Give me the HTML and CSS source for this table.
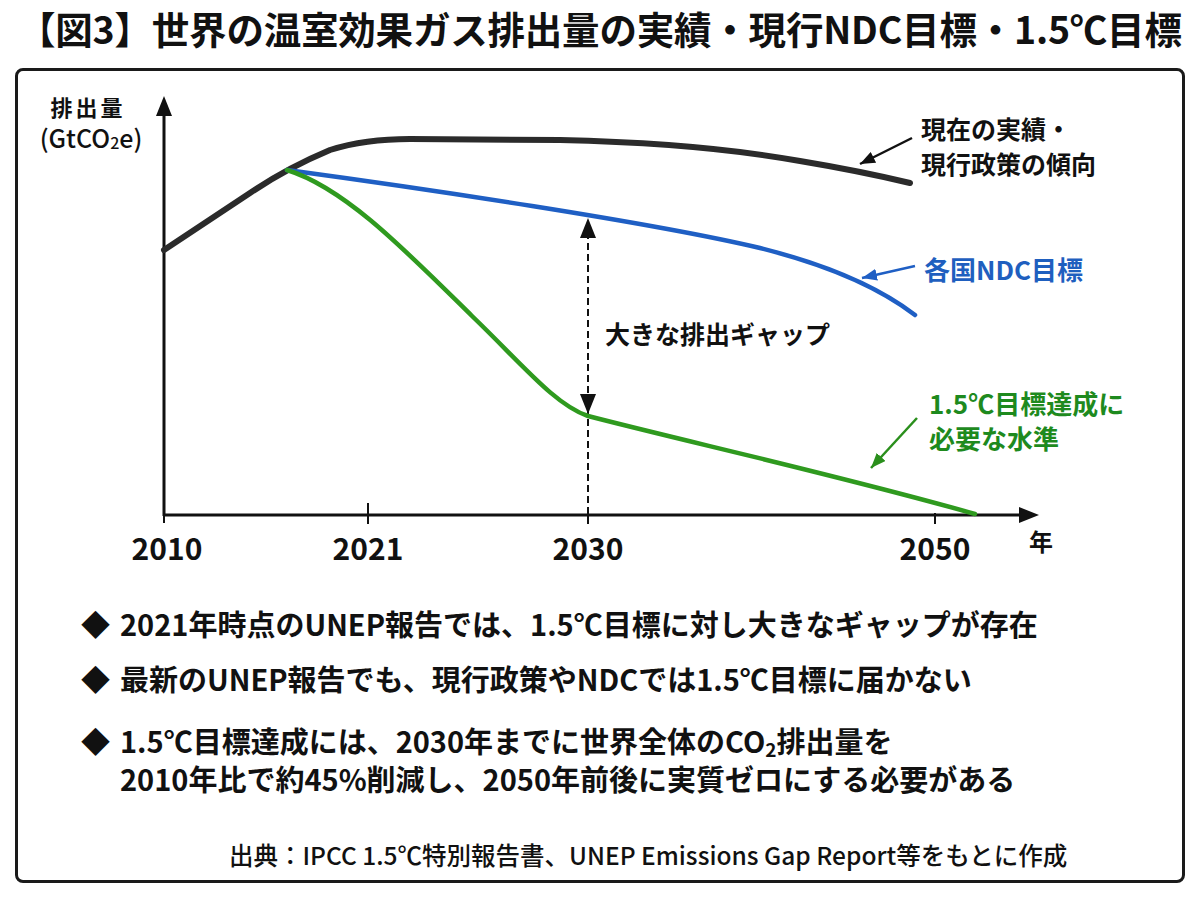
FILE: index.html
```html
<!DOCTYPE html>
<html lang="ja">
<head>
<meta charset="utf-8">
<title>図3 世界の温室効果ガス排出量</title>
<link rel="stylesheet" href="styles.css">
</head>
<body>
<h1 class="title">【図3】世界の温室効果ガス排出量の実績・現行NDC目標・1.5℃目標</h1>
<div class="frame">
  <svg class="chart" width="1164" height="519" viewBox="18 71 1164 519" xmlns="http://www.w3.org/2000/svg">
    <defs>
      <marker id="mk-black" markerUnits="userSpaceOnUse" markerWidth="16" markerHeight="12" refX="15" refY="6" orient="auto">
        <path d="M0,0 L15,6 L0,12 Z" fill="#111"/>
      </marker>
      <marker id="mk-blue" markerUnits="userSpaceOnUse" markerWidth="16" markerHeight="12" refX="15" refY="6" orient="auto">
        <path d="M0,0 L15,6 L0,12 Z" fill="#1f5fc4"/>
      </marker>
      <marker id="mk-green" markerUnits="userSpaceOnUse" markerWidth="16" markerHeight="12" refX="15" refY="6" orient="auto">
        <path d="M0,0 L15,6 L0,12 Z" fill="#2a8f1c"/>
      </marker>
    </defs>

    <!-- axes -->
    <line class="axis" x1="164" y1="516" x2="164" y2="110"/>
    <polygon class="axis-head" points="164,96 156,116 172,116"/>
    <line class="axis" x1="163" y1="515" x2="1022" y2="515"/>
    <polygon class="axis-head" points="1039,515 1019,507 1019,523"/>
    <line class="tick" x1="164" y1="515" x2="164" y2="523"/>
    <line class="tick" x1="368" y1="503" x2="368" y2="524"/>
    <line class="tick" x1="935" y1="513" x2="935" y2="524"/>
    <line class="tick" x1="588" y1="515" x2="588" y2="524"/>

    <!-- dashed gap arrow -->
    <line class="dash" x1="588" y1="232" x2="588" y2="515"/>
    <polygon class="axis-head" points="588,218 580,238 596,238"/>
    <polygon class="axis-head" points="588,414 580,394 596,394"/>

    <!-- curves -->
    <path class="line-black" d="M164,250 L250,193 Q287,168 330,150 Q365,139 410,139 L560,140 Q700,143 800,161 Q860,171 910,183"/>
    <path class="line-blue" d="M287,170 C420,188 650,222 760,248 C840,268 885,292 915,315"/>
    <path class="line-green" d="M287,170 C345,188 405,250 472,316 C522,364 555,405 588,416 C680,440 850,478 975,514"/>

    <!-- annotation arrows -->
    <line class="ann ann-black" x1="912" y1="138" x2="860" y2="164" marker-end="url(#mk-black)"/>
    <line class="ann ann-blue" x1="915" y1="266" x2="862" y2="278" marker-end="url(#mk-blue)"/>
    <line class="ann ann-green" x1="917" y1="418" x2="871" y2="468" marker-end="url(#mk-green)"/>

    <!-- y label -->
    <text class="ylab ylab-main" x="88" y="106">排出量</text>
    <text class="ylab ylab-unit" x="91" y="137">(GtCO<tspan class="sub" dy="5">2</tspan><tspan dy="-5">e)</tspan></text>

    <!-- x labels -->
    <text class="xlab" x="167" y="547">2010</text>
    <text class="xlab" x="368" y="547">2021</text>
    <text class="xlab" x="588" y="547">2030</text>
    <text class="xlab" x="935" y="547">2050</text>
    <text class="xunit" x="1041" y="540">年</text>

    <!-- labels -->
    <text class="lab" x="921" y="128">現在の実績・</text>
    <text class="lab" x="921" y="163">現行政策の傾向</text>
    <text class="lab lab-blue" x="924" y="268">各国NDC目標</text>
    <text class="lab" x="605" y="333">大きな排出ギャップ</text>
    <text class="lab lab-green" x="929" y="402">1.5℃目標達成に</text>
    <text class="lab lab-green" x="929" y="437">必要な水準</text>
  </svg>

  <ul class="points">
    <li><span class="mark">◆</span><span class="txt">2021年時点のUNEP報告では、1.5℃目標に対し大きなギャップが存在</span></li>
    <li><span class="mark">◆</span><span class="txt">最新のUNEP報告でも、現行政策やNDCでは1.5℃目標に届かない</span></li>
    <li><span class="mark">◆</span><span class="txt"><span class="ln">1.5℃目標達成には、2030年までに世界全体のCO<sub class="sub2">2</sub>排出量を</span><span class="ln">2010年比で約45%削減し、2050年前後に実質ゼロにする必要がある</span></span></li>
  </ul>

  <p class="source">出典：IPCC 1.5℃特別報告書、UNEP Emissions Gap Report等をもとに作成</p>
</div>
</body>
</html>
```

FILE: styles.css
```css
html, body {
  margin: 0;
  padding: 0;
  background: #ffffff;
}

body {
  width: 1200px;
  height: 900px;
  font-family: "Noto Sans CJK JP", "Noto Sans", sans-serif;
  color: #111111;
  overflow: hidden;
}

.title {
  margin: 0 0 16px 0;
  padding: 4px 0 0 18px;
  font-size: 37.5px;
  line-height: 48px;
  letter-spacing: -0.2px;
  font-weight: 700;
  white-space: nowrap;
  color: #111111;
}

.frame {
  margin: 0 15px;
  border: 3px solid #1a1a1a;
  border-radius: 8px;
  box-sizing: border-box;
  height: 815px;
  display: flex;
  flex-direction: column;
}

.chart {
  display: block;
  flex: none;
}

/* chart elements */
.axis {
  stroke: #111111;
  stroke-width: 3;
  fill: none;
}
.axis-head {
  fill: #111111;
}
.tick {
  stroke: #111111;
  stroke-width: 2;
}
.dash {
  stroke: #111111;
  stroke-width: 2;
  stroke-dasharray: 7 4;
}
.line-black {
  fill: none;
  stroke: #2b2b2b;
  stroke-width: 6;
  stroke-linecap: round;
  stroke-linejoin: round;
}
.line-blue {
  fill: none;
  stroke: #1f5fc4;
  stroke-width: 4.5;
  stroke-linecap: round;
}
.line-green {
  fill: none;
  stroke: #2f9a1f;
  stroke-width: 4.5;
  stroke-linecap: round;
}
.ann {
  stroke-width: 2.5;
}
.ann-black { stroke: #111111; }
.ann-blue { stroke: #1f5fc4; }
.ann-green { stroke: #2a8f1c; }

.ylab {
  font-family: "Noto Sans CJK JP", sans-serif;
  font-weight: 700;
  fill: #111111;
  text-anchor: middle;
  dominant-baseline: central;
}
.ylab-main {
  font-size: 22px;
  letter-spacing: 3px;
}
.ylab-unit {
  font-size: 25px;
  font-weight: 500;
}
.ylab .sub {
  font-size: 16px;
}

.xlab {
  font-family: "Noto Sans CJK JP", sans-serif;
  font-size: 30px;
  font-weight: 700;
  fill: #111111;
  text-anchor: middle;
  dominant-baseline: central;
}
.xunit {
  font-family: "Noto Sans CJK JP", sans-serif;
  font-size: 24px;
  font-weight: 700;
  fill: #111111;
  text-anchor: middle;
  dominant-baseline: central;
}

.lab {
  font-family: "Noto Sans CJK JP", sans-serif;
  font-size: 25px;
  font-weight: 700;
  fill: #111111;
  dominant-baseline: central;
}
.lab-blue {
  fill: #1f5fbf;
  font-size: 26px;
}
.lab-green {
  fill: #1e8a1e;
  font-size: 26px;
}

/* bullet points */
.points {
  list-style: none;
  margin: 14px 0 0 0;
  padding: 0 0 0 63px;
}
.points li {
  display: flex;
  font-size: 29px;
  line-height: 38px;
  font-weight: 700;
  margin-bottom: 17px;
  white-space: nowrap;
}
.points li:nth-child(2) {
  margin-bottom: 24px;
}
.points li:last-child {
  margin-bottom: 0;
}
.mark {
  flex: none;
  width: 39px;
}
.txt {
  flex: none;
  display: flex;
  flex-direction: column;
}
.ln {
  display: block;
  height: 38px;
  overflow: visible;
}
.sub2 {
  font-size: 19px;
  line-height: 0;
  vertical-align: -4px;
}

.source {
  margin: 43px 0 0 0;
  padding-left: 211px;
  font-size: 24.5px;
  line-height: 30px;
  font-weight: 500;
  white-space: nowrap;
}
```
